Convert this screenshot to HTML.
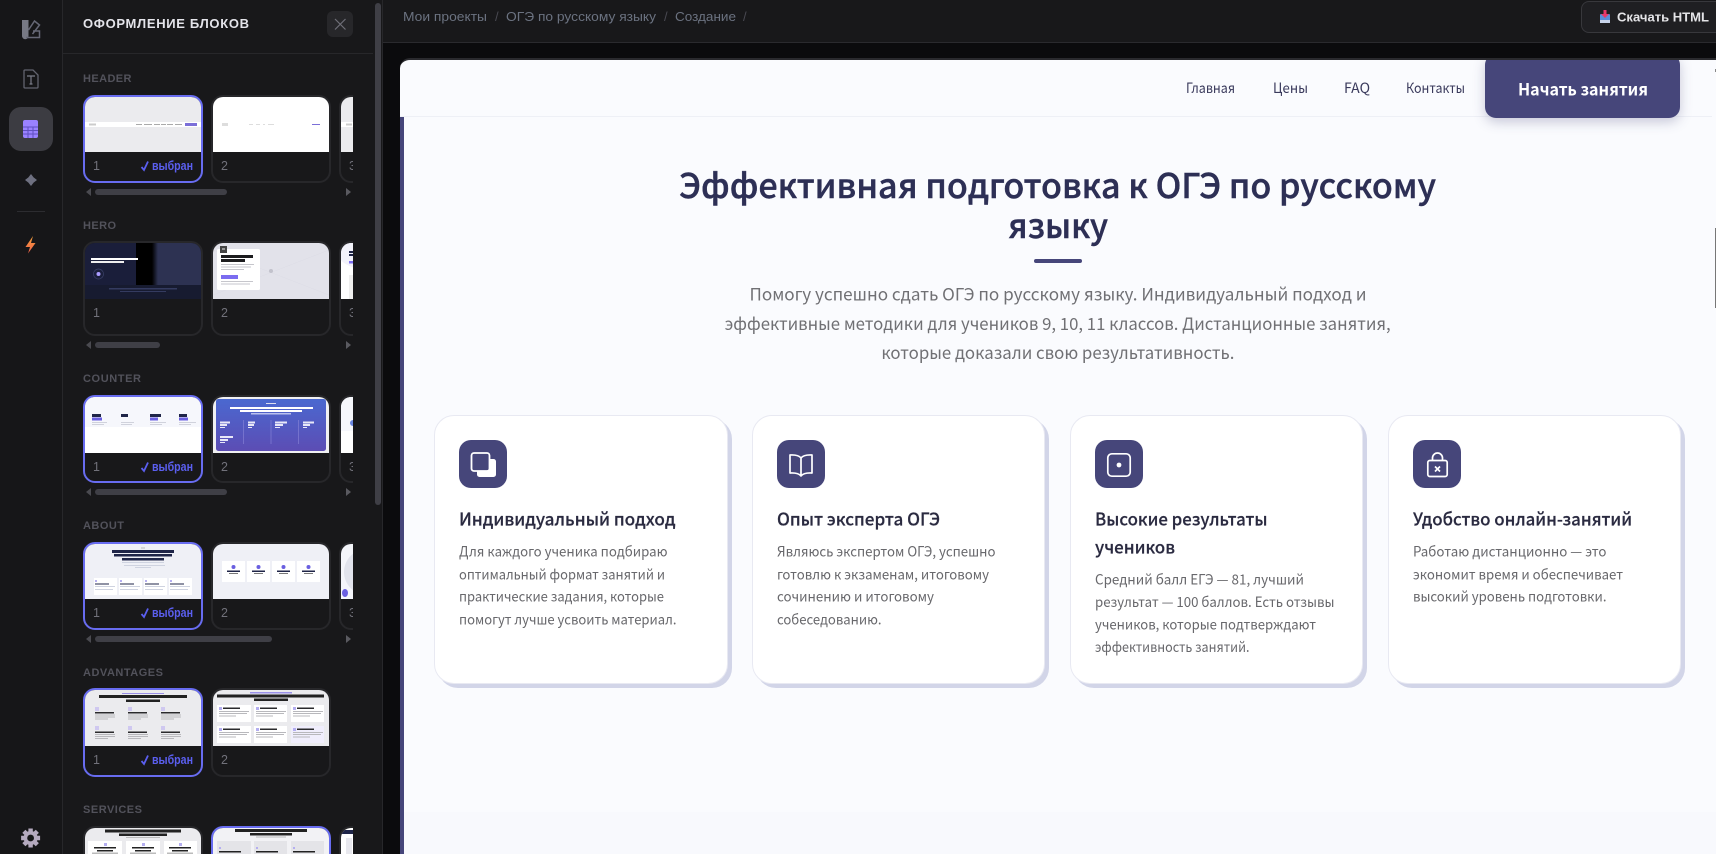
<!DOCTYPE html>
<html lang="ru"><head><meta charset="utf-8"><title>Оформление блоков</title>
<style>
*{box-sizing:border-box}
html,body{margin:0;padding:0;width:1716px;height:854px;overflow:hidden;background:#0b0b0d}
.a{position:absolute}
#rail{left:0;top:0;width:63px;height:854px;background:#161618;border-right:1px solid #27272a}
#panel{left:63px;top:0;width:320px;height:854px;background:#18181a;border-right:1px solid #27272a}
#phead{left:63px;top:53px;width:310px;height:1px;background:#27272a}
#thumb{left:375px;top:3px;width:6px;height:502px;background:#3f3f46;border-radius:3px}
#close{left:327px;top:11px;width:26px;height:26px;background:#27272a;border-radius:6px}
#top{left:383px;top:0;width:1333px;height:43px;background:#18181a;border-bottom:1px solid #2a2a2e}
#dl{left:1581px;top:1px;width:135px;height:32px;background:#1f1f22;border:1px solid #38383c;border-right:0;border-radius:8px 0 0 8px}
#pv{left:400px;top:58px;width:1316px;height:796px;background:#fafbfe;border-top:2px solid #2a2a2e;border-top-left-radius:10px;overflow:hidden}
#pv .strip{left:0;top:57px;width:4px;height:737px;background:#46467a}
#pv .hl{left:0;top:56px;width:1312px;height:1px;background:#eef0f6}
#pv .low{left:4px;top:752px;width:1312px;height:42px;background:#f8f9fd}
#pv .btn{left:1085px;top:-6px;width:195px;height:64px;background:#46467a;border-radius:11px;box-shadow:0 4px 12px rgba(70,70,120,.28)}
#pv .ul{left:634px;top:199px;width:48px;height:4px;background:#46467a;border-radius:2px}
#pv .edge{left:1315px;top:168px;width:1px;height:80px;background:#777}
#pv .tick{left:1315px;top:9px;width:1px;height:3px;background:#888}
.card{top:355px;width:293px;height:269px;background:#fff;border:1px solid #e8e9f2;border-radius:20px;box-shadow:4px 4px 0 #d2d5e8}
.ic{left:24px;top:24px;width:48px;height:48px;background:#46467a;border-radius:12px}
.ic svg{position:absolute;left:0;top:0}
#clip{left:0;top:0;width:353px;height:854px;overflow:hidden}
.c{position:absolute;width:120px;background:#18181a;border:2px solid #27272a;border-radius:12px;overflow:hidden}
.c.s{border-color:#686cf0}
.c.o{border-radius:12px 12px 0 0;border-bottom:0}
.c svg{display:block}
.bar{position:absolute;height:6px;background:#3f3f46;border-radius:3px;left:95px}
.ar{position:absolute;width:0;height:0;border-top:4px solid transparent;border-bottom:4px solid transparent}
.ar.l{left:86px;border-right:5px solid #4a4a50}
.ar.r{left:346px;border-left:5px solid #5a5a60}
#txt{position:absolute;left:0;top:0}
#txt text{white-space:pre}
.sb{font-family:"Liberation Sans",sans-serif}
.pf{font-family:"Noto Sans CJK SC","Liberation Sans",sans-serif}
</style></head><body>

<div class="a" id="rail"></div>
<div class="a" style="left:9px;top:107px;width:44px;height:44px;background:#3c3c42;border-radius:12px"></div>
<div class="a" style="left:17px;top:211px;width:28px;height:1px;background:#2c2c30"></div>
<svg class="a" style="left:0;top:0" width="62" height="854" viewBox="0 0 62 854">
 <path d="M22 20h6.500v16a3.200 3.200 0 0 1-6.500 0z" fill="#777984"/>
 <path d="M28.500 30l6-9 5 4-7 9M33 31h6.500v6.500H26" fill="none" stroke="#666876" stroke-width="1.500"/>
 <path d="M25 70h8l5 5v12a1 1 0 0 1-1 1H25a1 1 0 0 1-1-1V71a1 1 0 0 1 1-1z" fill="none" stroke="#62646f" stroke-width="1.300"/>
 <path d="M27 76h8M31 76v8M29.500 84h3" fill="none" stroke="#7a7c88" stroke-width="1.200"/>
 <rect x="23" y="120" width="15" height="18" rx="2" fill="#9a82ff"/>
 <path d="M23 127h15M23 130.500h15M23 134h15M28 127v11M33 127v11" stroke="#5f4fc0" stroke-width="1"/>
 <path d="M31 174l2.600 3.400 3.400 2.600-3.400 2.600-2.600 3.400-2.600-3.400-3.400-2.600 3.400-2.600z" fill="#6e7080"/>
 <defs><linearGradient id="bolt" x1="0" y1="0" x2="0" y2="1"><stop offset="0" stop-color="#f5a13a"/><stop offset="1" stop-color="#ef5f4c"/></linearGradient></defs>
 <path d="M33 236l-7.500 11h4.500L28 253.500l7.500-10.500H31z" fill="url(#bolt)"/>
 <g transform="translate(30.600 838)" fill="#b5aabf">
  <circle r="7"/>
  <path d="M-2.200-9.500h4.400v4h-4.400zM-2.200 5.500h4.400v4h-4.400zM-9.500-2.200h4v4.400h-4zM5.500-2.200h4v4.400h-4z"/>
  <path d="M-2.200-9.500h4.400v4h-4.400zM-2.200 5.500h4.400v4h-4.400zM-9.500-2.200h4v4.400h-4zM5.500-2.200h4v4.400h-4z" transform="rotate(45)"/>
  <circle r="3.400" fill="#161618"/>
 </g>
</svg>

<div class="a" id="panel"></div>
<div class="a" id="phead"></div>
<div class="a" id="thumb"></div>
<div class="a" id="close"></div>
<svg class="a" style="left:327px;top:11px" width="26" height="26"><path d="M8 8l10.500 10.500M18.500 8L8 18.500" stroke="#6f6f78" stroke-width="1.200"/></svg>

<div class="a" id="clip">
 <!-- HEADER -->
 <div class="c s" style="left:83px;top:95px;height:88px"><svg width="116" height="55" viewBox="85 97 116 55"><rect x="85" y="97" width="116" height="55" fill="#ebebee"/><rect x="85" y="122" width="116" height="5" fill="#fff"/><rect x="89" y="123.500" width="7" height="2" fill="#ccc"/><path d="M136 124.500h6M144 124.500h8M154 124.500h6M161 124.500h5M167 124.500h6M175 124.500h7" stroke="#aaa"/><rect x="185" y="123" width="12" height="3" fill="#7b6fd8"/></svg></div>
 <div class="c" style="left:211px;top:95px;height:88px"><svg width="116" height="55" viewBox="213 97 116 55"><rect x="213" y="97" width="116" height="55" fill="#fff"/><rect x="222" y="123" width="6" height="3" fill="#ddd"/><path d="M249 124.500h4M256 124.500h4M263 124.500h2M268 124.500h6" stroke="#ddd"/><path d="M312 124.500h8" stroke="#7b6fd8"/></svg></div>
 <div class="c" style="left:339px;top:95px;height:88px"><svg width="116" height="55" viewBox="341 97 116 55"><rect x="341" y="97" width="116" height="55" fill="#ebebee"/><rect x="341" y="122" width="116" height="5" fill="#fff"/><rect x="346" y="123.500" width="6" height="2" fill="#ccc"/></svg></div>
 <div class="ar l" style="top:188px"></div><div class="bar" style="top:189px;width:132px"></div><div class="ar r" style="top:188px"></div>

 <!-- HERO -->
 <div class="c" style="left:83px;top:241px;height:95px"><svg width="116" height="56" viewBox="85 243 116 56"><defs><linearGradient id="hg"><stop offset="0" stop-color="#000"/><stop offset="1" stop-color="#2d3252"/></linearGradient></defs><rect x="85" y="243" width="116" height="56" fill="#1a1e3a"/><rect x="157" y="243" width="44" height="42" fill="#2d3252"/><rect x="136" y="243" width="16" height="42" fill="#000"/><rect x="152" y="243" width="6" height="42" fill="url(#hg)"/><rect x="85" y="285" width="116" height="14" fill="#171b30"/><rect x="91" y="258" width="47" height="2" fill="#fff"/><rect x="91" y="261" width="33" height="2" fill="#eee"/><circle cx="98.500" cy="274" r="5" fill="none" stroke="#3a4168" stroke-width=".7"/><circle cx="98.500" cy="274" r="2" fill="#aa9cff"/><rect x="109" y="288" width="68" height="1.500" fill="#343b60"/><rect x="120" y="291" width="46" height="1" fill="#343b60"/></svg></div>
 <div class="c" style="left:211px;top:241px;height:95px"><svg width="116" height="56" viewBox="213 243 116 56"><rect x="213" y="243" width="116" height="56" fill="#e2e2ea"/><path d="M213 250l116 45M213 295l116-45" stroke="#dcdce5" stroke-width=".5"/><rect x="217" y="249" width="43" height="41" rx="1.500" fill="#fff"/><rect x="220" y="246" width="7" height="7" fill="#444"/><rect x="222" y="248" width="3" height="2" fill="#999"/><rect x="221" y="255" width="32" height="3" fill="#1c1c1e"/><rect x="221" y="259" width="24" height="3" fill="#1c1c1e"/><rect x="221" y="264" width="33" height="1" fill="#c6c6cc"/><rect x="221" y="266.500" width="30" height="1" fill="#c6c6cc"/><rect x="221" y="269" width="23" height="1" fill="#c6c6cc"/><rect x="221" y="275" width="17" height="4" fill="#7b6cf0"/><rect x="221" y="281" width="32" height="1" fill="#c6c6cc"/><rect x="221" y="283.500" width="29" height="1" fill="#c6c6cc"/><circle cx="271" cy="271" r="2" fill="#c2c2cc"/></svg></div>
 <div class="c" style="left:339px;top:241px;height:95px"><svg width="116" height="56" viewBox="341 243 116 56"><rect x="341" y="243" width="116" height="56" fill="#fff"/><ellipse cx="370" cy="250" rx="34" ry="20" fill="#f2f2fa"/><rect x="349" y="251" width="5" height="2" fill="#1f2548"/><rect x="349" y="254" width="5" height="2" fill="#1f2548"/><rect x="349" y="261" width="5" height="2.500" fill="#7b6cf0"/><rect x="349" y="275" width="5" height="24" fill="#eee"/></svg></div>
 <div class="ar l" style="top:341px"></div><div class="bar" style="top:342px;width:65px"></div><div class="ar r" style="top:341px"></div>

 <!-- COUNTER -->
 <div class="c s" style="left:83px;top:395px;height:88px"><svg width="116" height="56" viewBox="85 397 116 56"><rect x="85" y="397" width="116" height="56" fill="#fff"/><rect x="85" y="397" width="116" height="30" fill="#f6f7fc"/><g id="cc"><rect x="92" y="414" width="9" height="3" fill="#1f2548"/><rect x="92" y="417.500" width="10" height="3" fill="#6a5fe0"/><rect x="92" y="422" width="15" height="1" fill="#d0d2dc"/><rect x="92" y="424" width="12" height="1" fill="#d0d2dc"/></g><rect x="121" y="414" width="7" height="3" fill="#1f2548"/><rect x="121" y="422" width="13" height="1" fill="#d0d2dc"/><rect x="121" y="424" width="11" height="1" fill="#d0d2dc"/><rect x="150" y="414" width="11" height="3" fill="#1f2548"/><rect x="150" y="417.500" width="8" height="3" fill="#6a5fe0"/><rect x="150" y="422" width="16" height="1" fill="#d0d2dc"/><rect x="150" y="424" width="12" height="1" fill="#d0d2dc"/><rect x="179" y="414" width="8" height="3" fill="#1f2548"/><rect x="179" y="417.500" width="9" height="3" fill="#6a5fe0"/><rect x="179" y="422" width="17" height="1" fill="#d0d2dc"/><rect x="179" y="424" width="12" height="1" fill="#d0d2dc"/></svg></div>
 <div class="c" style="left:211px;top:395px;height:88px"><svg width="116" height="56" viewBox="213 397 116 56"><defs><linearGradient id="cg" x1="0" y1="0" x2="0" y2="1"><stop offset="0" stop-color="#4a68d0"/><stop offset="1" stop-color="#5c4db4"/></linearGradient></defs><rect x="213" y="397" width="116" height="56" fill="#f0f0f2"/><rect x="216" y="399" width="110" height="52" rx="2.500" fill="url(#cg)"/><rect x="266" y="403" width="10" height="1" fill="#dde"/><rect x="230" y="407" width="83" height="2" fill="#fff"/><rect x="240" y="410" width="62" height="2" fill="#fff"/><rect x="251" y="413" width="40" height="1.500" fill="#b9c0ee"/><g fill="#e8e8f8"><rect x="220" y="421.500" width="10" height="2"/><rect x="220" y="424" width="7" height="2"/><rect x="220" y="427" width="5" height="1"/><rect x="248" y="421.500" width="7" height="2"/><rect x="248" y="424" width="6" height="2"/><rect x="248" y="427" width="4" height="1"/><rect x="275" y="421.500" width="12" height="2"/><rect x="275" y="424" width="8" height="2"/><rect x="275" y="427" width="5" height="1"/><rect x="303" y="421.500" width="11" height="2"/><rect x="303" y="424" width="7" height="2"/><rect x="303" y="427" width="4" height="1"/><rect x="220" y="436" width="13" height="2"/><rect x="220" y="439" width="8" height="2"/><rect x="220" y="442" width="5" height="1"/></g><path d="M243.500 420v24M271 420v24M298.500 420v24" stroke="#8a86d8" stroke-width=".6"/></svg></div>
 <div class="c" style="left:339px;top:395px;height:88px"><svg width="116" height="56" viewBox="341 397 116 56"><rect x="341" y="397" width="116" height="56" fill="#fff"/><rect x="341" y="397" width="116" height="34" fill="#f6f7fc"/><circle cx="353" cy="423" r="3" fill="#6a86e0"/></svg></div>
 <div class="ar l" style="top:488px"></div><div class="bar" style="top:489px;width:132px"></div><div class="ar r" style="top:488px"></div>

 <!-- ABOUT -->
 <div class="c s" style="left:83px;top:542px;height:88px"><svg width="116" height="55" viewBox="85 544 116 55"><rect x="85" y="544" width="116" height="55" fill="#eff0f6"/><rect x="141" y="547.500" width="4" height="1" fill="#bbb"/><rect x="112" y="550" width="62" height="3" fill="#1f2548"/><rect x="114" y="554" width="58" height="2.500" fill="#1f2548"/><rect x="122" y="558" width="42" height="2.500" fill="#1f2548"/><rect x="122" y="562" width="42" height="1" fill="#cfd3e0"/><rect x="124" y="565" width="41" height="1" fill="#cfd3e0"/><rect x="135" y="567" width="16" height="1" fill="#cfd3e0"/><g fill="#fff"><rect x="94" y="578" width="23" height="17"/><rect x="119" y="578" width="23" height="17"/><rect x="144" y="578" width="23" height="17"/><rect x="169" y="578" width="23" height="17"/></g><g fill="#1f2548"><rect x="95" y="583.500" width="14" height="1"/><rect x="120" y="583.500" width="14" height="1"/><rect x="145" y="583.500" width="14" height="1"/><rect x="170" y="583.500" width="14" height="1"/></g><g fill="#cfd3e0"><rect x="95" y="586" width="20" height="1"/><rect x="120" y="586" width="20" height="1"/><rect x="145" y="586" width="20" height="1"/><rect x="170" y="586" width="20" height="1"/><rect x="95" y="589" width="18" height="1"/><rect x="120" y="589" width="18" height="1"/><rect x="145" y="589" width="18" height="1"/><rect x="170" y="589" width="18" height="1"/></g><g fill="#b4aef0"><rect x="95" y="580" width="2" height="2"/><rect x="120" y="580" width="2" height="2"/><rect x="145" y="580" width="2" height="2"/><rect x="170" y="580" width="2" height="2"/></g></svg></div>
 <div class="c" style="left:211px;top:542px;height:88px"><svg width="116" height="55" viewBox="213 544 116 55"><rect x="213" y="544" width="116" height="55" fill="#eff0f6"/><g fill="#fff"><rect x="222" y="561" width="23" height="21"/><rect x="247" y="561" width="23" height="21"/><rect x="272" y="561" width="23" height="21"/><rect x="297" y="561" width="23" height="21"/></g><g fill="#6a5fe0"><circle cx="233.500" cy="567" r="2"/><circle cx="258.500" cy="567" r="2"/><circle cx="283.500" cy="567" r="2"/><circle cx="308.500" cy="567" r="2"/></g><g fill="#1f2548"><rect x="227" y="570.500" width="13" height="1.500"/><rect x="252" y="570.500" width="13" height="1.500"/><rect x="277" y="570.500" width="13" height="1.500"/><rect x="302" y="570.500" width="13" height="1.500"/></g><g fill="#777"><rect x="229" y="573" width="9" height="1"/><rect x="254" y="573" width="9" height="1"/><rect x="279" y="573" width="9" height="1"/><rect x="304" y="573" width="9" height="1"/></g></svg></div>
 <div class="c" style="left:339px;top:542px;height:88px"><svg width="116" height="55" viewBox="341 544 116 55"><rect x="341" y="544" width="116" height="55" fill="#f4f5fa"/><circle cx="367" cy="572" r="23" fill="#e1e3ec"/><ellipse cx="345" cy="593" rx="3" ry="4" fill="#6a5fe0"/></svg></div>
 <div class="ar l" style="top:635px"></div><div class="bar" style="top:636px;width:177px"></div><div class="ar r" style="top:635px"></div>

 <!-- ADVANTAGES -->
 <div class="c s" style="left:83px;top:688px;height:89px"><svg width="116" height="56" viewBox="85 690 116 56"><rect x="85" y="690" width="116" height="56" fill="#ebebee"/><rect x="122" y="693" width="42" height="1" fill="#9a90e8"/><rect x="99" y="695" width="88" height="3" fill="#222"/><rect x="126" y="699.500" width="34" height="2.500" fill="#222"/>
 <g id="advA"><rect x="95" y="707" width="4" height="4" fill="#cfc8f0"/><rect x="128" y="707" width="4" height="4" fill="#cfc8f0"/><rect x="161" y="707" width="4" height="4" fill="#cfc8f0"/><rect x="95" y="726" width="4" height="4" fill="#cfc8f0"/><rect x="128" y="726" width="4" height="4" fill="#cfc8f0"/><rect x="161" y="726" width="4" height="4" fill="#cfc8f0"/></g>
 <g fill="#2a2a2c"><rect x="95" y="712" width="19" height="1.500"/><rect x="128" y="712" width="19" height="1.500"/><rect x="161" y="712" width="19" height="1.500"/><rect x="95" y="731.500" width="19" height="1.500"/><rect x="128" y="731.500" width="19" height="1.500"/><rect x="161" y="731.500" width="19" height="1.500"/></g>
 <g fill="#b8b8bc"><rect x="95" y="714.500" width="20" height="1"/><rect x="128" y="714.500" width="20" height="1"/><rect x="161" y="714.500" width="20" height="1"/><rect x="95" y="716.500" width="20" height="1"/><rect x="128" y="716.500" width="20" height="1"/><rect x="161" y="716.500" width="20" height="1"/><rect x="95" y="718.500" width="13" height="1"/><rect x="128" y="718.500" width="13" height="1"/><rect x="161" y="718.500" width="13" height="1"/><rect x="95" y="734" width="20" height="1"/><rect x="128" y="734" width="20" height="1"/><rect x="161" y="734" width="20" height="1"/><rect x="95" y="736" width="20" height="1"/><rect x="128" y="736" width="20" height="1"/><rect x="161" y="736" width="20" height="1"/><rect x="95" y="738" width="13" height="1"/><rect x="128" y="738" width="13" height="1"/><rect x="161" y="738" width="13" height="1"/></g></svg></div>
 <div class="c" style="left:211px;top:688px;height:89px"><svg width="116" height="56" viewBox="213 690 116 56"><rect x="213" y="690" width="116" height="56" fill="#ebebee"/><rect x="250" y="692" width="42" height="1.500" fill="#9a90e8"/><rect x="217" y="694.500" width="107" height="3" fill="#222"/><rect x="254" y="698.500" width="34" height="2.500" fill="#222"/><g fill="#fff"><rect x="217" y="705" width="34" height="17"/><rect x="254" y="705" width="33" height="17"/><rect x="291" y="705" width="33" height="17"/><rect x="217" y="726" width="34" height="17"/><rect x="254" y="726" width="33" height="17"/></g><rect x="291" y="726" width="33" height="17" fill="#f0eefc"/><g fill="#b4aef0"><rect x="219" y="707" width="3" height="3"/><rect x="256" y="707" width="3" height="3"/><rect x="293" y="707" width="3" height="3"/><rect x="219" y="728" width="3" height="3"/><rect x="256" y="728" width="3" height="3"/><rect x="293" y="728" width="3" height="3"/></g><g fill="#2a2a2c"><rect x="223" y="707.500" width="17" height="1.500"/><rect x="260" y="707.500" width="17" height="1.500"/><rect x="297" y="707.500" width="17" height="1.500"/><rect x="223" y="728.500" width="17" height="1.500"/><rect x="260" y="728.500" width="17" height="1.500"/><rect x="297" y="728.500" width="17" height="1.500"/></g><g fill="#b8b8bc"><rect x="219" y="711" width="30" height="1"/><rect x="256" y="711" width="30" height="1"/><rect x="293" y="711" width="30" height="1"/><rect x="219" y="713" width="28" height="1"/><rect x="256" y="713" width="28" height="1"/><rect x="293" y="713" width="28" height="1"/><rect x="219" y="715.500" width="17" height="1"/><rect x="256" y="715.500" width="17" height="1"/><rect x="293" y="715.500" width="17" height="1"/><rect x="219" y="732" width="30" height="1"/><rect x="256" y="732" width="30" height="1"/><rect x="293" y="732" width="30" height="1"/><rect x="219" y="734" width="28" height="1"/><rect x="256" y="734" width="28" height="1"/><rect x="293" y="734" width="28" height="1"/><rect x="219" y="736.500" width="17" height="1"/><rect x="256" y="736.500" width="17" height="1"/><rect x="293" y="736.500" width="17" height="1"/></g></svg></div>

 <!-- SERVICES -->
 <div class="c o" style="left:83px;top:826px;height:28px"><svg width="116" height="26" viewBox="85 828 116 26"><rect x="85" y="828" width="116" height="26" fill="#ebebee"/><rect x="105" y="829.500" width="76" height="3" fill="#222"/><rect x="119" y="833.500" width="48" height="2.500" fill="#222"/><rect x="126" y="837" width="34" height="1" fill="#bbb"/><g fill="#fff"><rect x="88" y="841" width="34" height="13"/><rect x="126" y="841" width="34" height="13"/><rect x="164" y="841" width="33" height="13"/></g><g fill="#b4aef0"><rect x="104" y="843" width="3" height="3"/><rect x="142" y="843" width="3" height="3"/><rect x="179" y="843" width="3" height="3"/></g><g fill="#222"><rect x="94" y="847" width="22" height="1.500"/><rect x="132" y="847" width="22" height="1.500"/><rect x="169" y="847" width="22" height="1.500"/><rect x="97" y="850" width="16" height="1.500"/><rect x="135" y="850" width="16" height="1.500"/><rect x="172" y="850" width="16" height="1.500"/></g><g fill="#bbb"><rect x="92" y="852.500" width="26" height="1.500"/><rect x="130" y="852.500" width="26" height="1.500"/><rect x="167" y="852.500" width="26" height="1.500"/></g></svg></div>
 <div class="c s o" style="left:211px;top:826px;height:28px"><svg width="116" height="26" viewBox="213 828 116 26"><rect x="213" y="828" width="116" height="26" fill="#f2f2f5"/><rect x="235" y="829" width="72" height="3" fill="#222"/><rect x="250" y="833" width="42" height="2.500" fill="#222"/><rect x="256" y="836.500" width="30" height="1" fill="#bbb"/><g fill="#e4e4e8"><rect x="217" y="841" width="34" height="13"/><rect x="254" y="841" width="33" height="13"/><rect x="291" y="841" width="33" height="13"/></g><g fill="#b4aef0"><rect x="219" y="847" width="2" height="2"/><rect x="256" y="847" width="2" height="2"/><rect x="293" y="847" width="2" height="2"/></g><g fill="#222"><rect x="219" y="851" width="22" height="1.500"/><rect x="256" y="851" width="22" height="1.500"/><rect x="293" y="851" width="22" height="1.500"/></g></svg></div>
 <div class="c o" style="left:339px;top:826px;height:28px"><svg width="116" height="26" viewBox="341 828 116 26"><rect x="341" y="828" width="116" height="26" fill="#fff"/><rect x="341" y="830" width="116" height="4" fill="#1f2548"/><rect x="346" y="838" width="6" height="16" fill="#e8e8ee"/></svg></div>
</div>

<div class="a" id="top"></div>
<div class="a" id="dl"></div>
<svg class="a" style="left:1598px;top:9px" width="14" height="16" viewBox="0 0 14 16"><rect x="2" y="5" width="10" height="9" rx="1" fill="#5a8ed8"/><rect x="2" y="11" width="10" height="3" fill="#c8d4ea"/><path d="M5.500 1h3v4H11L7 9 3 5h2.500z" fill="#e8386a"/></svg>

<div class="a" id="pv">
 <div class="a low"></div>
 <div class="a strip"></div>
 <div class="a hl"></div>
 <div class="a btn"></div>
 <div class="a ul"></div>
 <div class="a edge"></div>
 <div class="a tick"></div>
 <div class="a card" style="left:34px;width:294px"><div class="a ic"><svg width="48" height="48"><rect x="18" y="19" width="19" height="18" rx="2.500" fill="#fff"/><rect x="12.500" y="13" width="18" height="18" rx="2.500" fill="#46467a" stroke="#fff" stroke-width="1.800"/></svg></div></div>
 <div class="a card" style="left:352px"><div class="a ic"><svg width="48" height="48"><path d="M24 18c-2-2.500-6-3.300-11-3v18c5-.3 9 .5 11 3 2-2.500 6-3.300 11-3V15c-5-.3-9 .5-11 3zM24 18v18" fill="none" stroke="#fff" stroke-width="1.700" stroke-linejoin="round"/></svg></div></div>
 <div class="a card" style="left:670px"><div class="a ic"><svg width="48" height="48"><rect x="12.800" y="13.800" width="22.400" height="22.400" rx="4" fill="none" stroke="#fff" stroke-width="1.700"/><circle cx="24" cy="25" r="2.400" fill="#fff"/></svg></div></div>
 <div class="a card" style="left:988px"><div class="a ic"><svg width="48" height="48"><rect x="14.800" y="20.500" width="19.400" height="16" rx="2" fill="none" stroke="#fff" stroke-width="1.700"/><path d="M19.500 20.500v-2.500a5 5 0 0 1 10 0v2.500" fill="none" stroke="#fff" stroke-width="1.700"/><path d="M22 26.500l5 5M27 26.500l-5 5" stroke="#fff" stroke-width="1.700"/></svg></div></div>
</div>

<svg id="txt" width="1716" height="854" viewBox="0 0 1716 854">
 <g class="sb">
  <text x="83" y="28" font-size="13" font-weight="700" fill="#e4e4ea" textLength="166" lengthAdjust="spacing">ОФОРМЛЕНИЕ БЛОКОВ</text>
  <g font-size="11" font-weight="700" fill="#52525b">
   <text x="83" y="82" textLength="48.500" lengthAdjust="spacing">HEADER</text>
   <text x="83" y="229" textLength="33" lengthAdjust="spacing">HERO</text>
   <text x="83" y="382" textLength="58" lengthAdjust="spacing">COUNTER</text>
   <text x="83" y="529" textLength="41" lengthAdjust="spacing">ABOUT</text>
   <text x="83" y="676" textLength="80" lengthAdjust="spacing">ADVANTAGES</text>
   <text x="83" y="813" textLength="59" lengthAdjust="spacing">SERVICES</text>
  </g>
  <clipPath id="cl"><rect x="0" y="0" width="353" height="854"/></clipPath>
  <g font-size="12.500" fill="#71717a">
   <text x="93" y="170">1</text><text x="221" y="170">2</text><text x="349" y="170" clip-path="url(#cl)">3</text>
   <text x="93" y="317">1</text><text x="221" y="317">2</text><text x="349" y="317" clip-path="url(#cl)">3</text>
   <text x="93" y="471">1</text><text x="221" y="471">2</text><text x="349" y="471" clip-path="url(#cl)">3</text>
   <text x="93" y="617">1</text><text x="221" y="617">2</text><text x="349" y="617" clip-path="url(#cl)">3</text>
   <text x="93" y="764">1</text><text x="221" y="764">2</text>
  </g>
  <g font-size="12.500" font-weight="700" fill="#5b5ff0">
   <text x="152" y="170" textLength="41" lengthAdjust="spacingAndGlyphs">выбран</text>
   <text x="152" y="471" textLength="41" lengthAdjust="spacingAndGlyphs">выбран</text>
   <text x="152" y="617" textLength="41" lengthAdjust="spacingAndGlyphs">выбран</text>
   <text x="152" y="764" textLength="41" lengthAdjust="spacingAndGlyphs">выбран</text>
  </g>
  <g fill="none" stroke="#5b5ff0" stroke-width="1.800">
   <path d="M141.500 167l2.500 3 4-8.500"/><path d="M141.500 468l2.500 3 4-8.500"/><path d="M141.500 614l2.500 3 4-8.500"/><path d="M141.500 761l2.500 3 4-8.500"/>
  </g>
  <g font-size="13" fill="#6b7280">
   <text x="403" y="21" textLength="84" lengthAdjust="spacingAndGlyphs">Мои проекты</text>
   <text x="495" y="21" fill="#4a4a52">/</text>
   <text x="506" y="21" textLength="150" lengthAdjust="spacingAndGlyphs">ОГЭ по русскому языку</text>
   <text x="664" y="21" fill="#4a4a52">/</text>
   <text x="675" y="21" textLength="61" lengthAdjust="spacingAndGlyphs">Создание</text>
   <text x="743" y="21" fill="#4a4a52">/</text>
  </g>
  <text x="1617" y="21.500" font-size="13" font-weight="700" fill="#e4e4e7" textLength="92" lengthAdjust="spacingAndGlyphs">Скачать HTML</text>
 </g>
 <g class="pf">
  <g font-size="14" fill="#3a3a5c">
   <text x="1186" y="93" textLength="49" lengthAdjust="spacingAndGlyphs">Главная</text>
   <text x="1273" y="93" textLength="35" lengthAdjust="spacingAndGlyphs">Цены</text>
   <text x="1344" y="93" textLength="26" lengthAdjust="spacingAndGlyphs">FAQ</text>
   <text x="1406" y="93" textLength="59" lengthAdjust="spacingAndGlyphs">Контакты</text>
  </g>
  <text x="1518" y="95.500" font-size="17" font-weight="700" fill="#fff" textLength="130" lengthAdjust="spacingAndGlyphs">Начать занятия</text>
  <g font-size="34" font-weight="500" fill="#2d2f55" stroke="#2d2f55" stroke-width=".4">
   <text x="679" y="198" textLength="757" lengthAdjust="spacingAndGlyphs">Эффективная подготовка к ОГЭ по русскому</text>
   <text x="1008" y="238" textLength="100" lengthAdjust="spacingAndGlyphs">языку</text>
  </g>
  <g font-size="17" fill="#707074">
   <text x="749.500" y="300.500" textLength="617" lengthAdjust="spacingAndGlyphs">Помогу успешно сдать ОГЭ по русскому языку. Индивидуальный подход и</text>
   <text x="724.700" y="330" textLength="666" lengthAdjust="spacingAndGlyphs">эффективные методики для учеников 9, 10, 11 классов. Дистанционные занятия,</text>
   <text x="881.400" y="359" textLength="353" lengthAdjust="spacingAndGlyphs">которые доказали свою результативность.</text>
  </g>
  <g font-size="17.500" font-weight="500" fill="#2a2a40" stroke="#2a2a40" stroke-width=".2">
   <text x="459" y="525.500" textLength="216.500" lengthAdjust="spacingAndGlyphs">Индивидуальный подход</text>
   <text x="777" y="525.500" textLength="163" lengthAdjust="spacingAndGlyphs">Опыт эксперта ОГЭ</text>
   <text x="1095" y="525.500" textLength="172.500" lengthAdjust="spacingAndGlyphs">Высокие результаты</text>
   <text x="1095" y="553.500" textLength="80" lengthAdjust="spacingAndGlyphs">учеников</text>
   <text x="1413" y="525.500" textLength="219" lengthAdjust="spacingAndGlyphs">Удобство онлайн-занятий</text>
  </g>
  <g font-size="14" fill="#68686c">
   <text x="459" y="556.500" textLength="208.500" lengthAdjust="spacingAndGlyphs">Для каждого ученика подбираю</text>
   <text x="459" y="579.500" textLength="206" lengthAdjust="spacingAndGlyphs">оптимальный формат занятий и</text>
   <text x="459" y="601.500" textLength="205" lengthAdjust="spacingAndGlyphs">практические задания, которые</text>
   <text x="459" y="624.500" textLength="217.500" lengthAdjust="spacingAndGlyphs">помогут лучше усвоить материал.</text>
   <text x="777" y="556.500" textLength="218.500" lengthAdjust="spacingAndGlyphs">Являюсь экспертом ОГЭ, успешно</text>
   <text x="777" y="579.500" textLength="212" lengthAdjust="spacingAndGlyphs">готовлю к экзаменам, итоговому</text>
   <text x="777" y="601.500" textLength="157" lengthAdjust="spacingAndGlyphs">сочинению и итоговому</text>
   <text x="777" y="624.500" textLength="104.500" lengthAdjust="spacingAndGlyphs">собеседованию.</text>
   <text x="1095" y="584.500" textLength="209" lengthAdjust="spacingAndGlyphs">Средний балл ЕГЭ — 81, лучший</text>
   <text x="1095" y="607" textLength="239.500" lengthAdjust="spacingAndGlyphs">результат — 100 баллов. Есть отзывы</text>
   <text x="1095" y="629.500" textLength="221" lengthAdjust="spacingAndGlyphs">учеников, которые подтверждают</text>
   <text x="1095" y="652" textLength="154.500" lengthAdjust="spacingAndGlyphs">эффективность занятий.</text>
   <text x="1413" y="556.500" textLength="193.500" lengthAdjust="spacingAndGlyphs">Работаю дистанционно — это</text>
   <text x="1413" y="579.500" textLength="210" lengthAdjust="spacingAndGlyphs">экономит время и обеспечивает</text>
   <text x="1413" y="601.500" textLength="193.500" lengthAdjust="spacingAndGlyphs">высокий уровень подготовки.</text>
  </g>
 </g>
</svg>
</body></html>
